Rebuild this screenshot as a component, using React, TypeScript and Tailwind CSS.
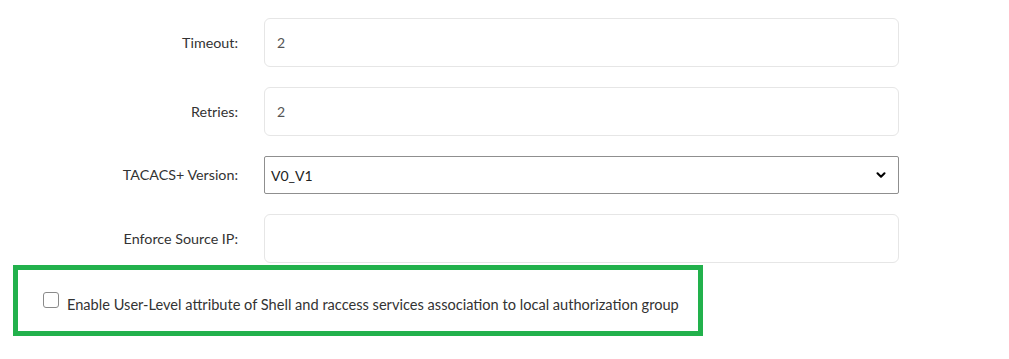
import { ChevronDown } from "lucide-react";

const font = { fontFamily: "Lato, 'Noto Sans', sans-serif" };

function Row({ label, children }: { label: string; children: React.ReactNode }) {
  return (
    <div className="flex items-center">
      <label className="w-[238px] shrink-0 text-right text-[14.3px] text-[#333]">{label}</label>
      <div className="ml-[26px] w-[635px]">{children}</div>
    </div>
  );
}

function TextBox({ value }: { value?: string }) {
  return (
    <div className="h-[49px] rounded-md border border-[#e6e6e6] bg-white px-[12px] flex items-center text-[14px] text-[#555]">
      {value}
    </div>
  );
}

export default function App() {
  return (
    <div className="w-[1009px] h-[359px] bg-white overflow-hidden pt-[18px]" style={font}>
      <div className="flex flex-col gap-[20px]">
        <Row label="Timeout:">
          <TextBox value="2" />
        </Row>
        <Row label="Retries:">
          <TextBox value="2" />
        </Row>
        <Row label="TACACS+ Version:">
          <div className="h-[38px] rounded-[2px] border border-[#8f8f8f] bg-white pl-[6px] pr-[10px] flex items-center justify-between text-[14px] text-[#222]">
            <span>V0_V1</span>
            <ChevronDown size={14} strokeWidth={3.6} className="text-black" />
          </div>
        </Row>
        <Row label="Enforce Source IP:">
          <TextBox />
        </Row>
      </div>

      {/* highlighted option */}
      <div className="ml-[13px] mt-[2px] w-[690px] h-[71px] border-[5px] border-[#22b14c] flex items-center pl-[25px]">
        <span className="w-[16px] h-[16px] rounded-[3px] border border-[#8a8a8a] bg-white shrink-0 -mt-[2px]" />
        <span className="ml-[8px] text-[14.6px] text-[#333] mt-[8px]">
          Enable User-Level attribute of Shell and raccess services association to local authorization group
        </span>
      </div>
    </div>
  );
}
